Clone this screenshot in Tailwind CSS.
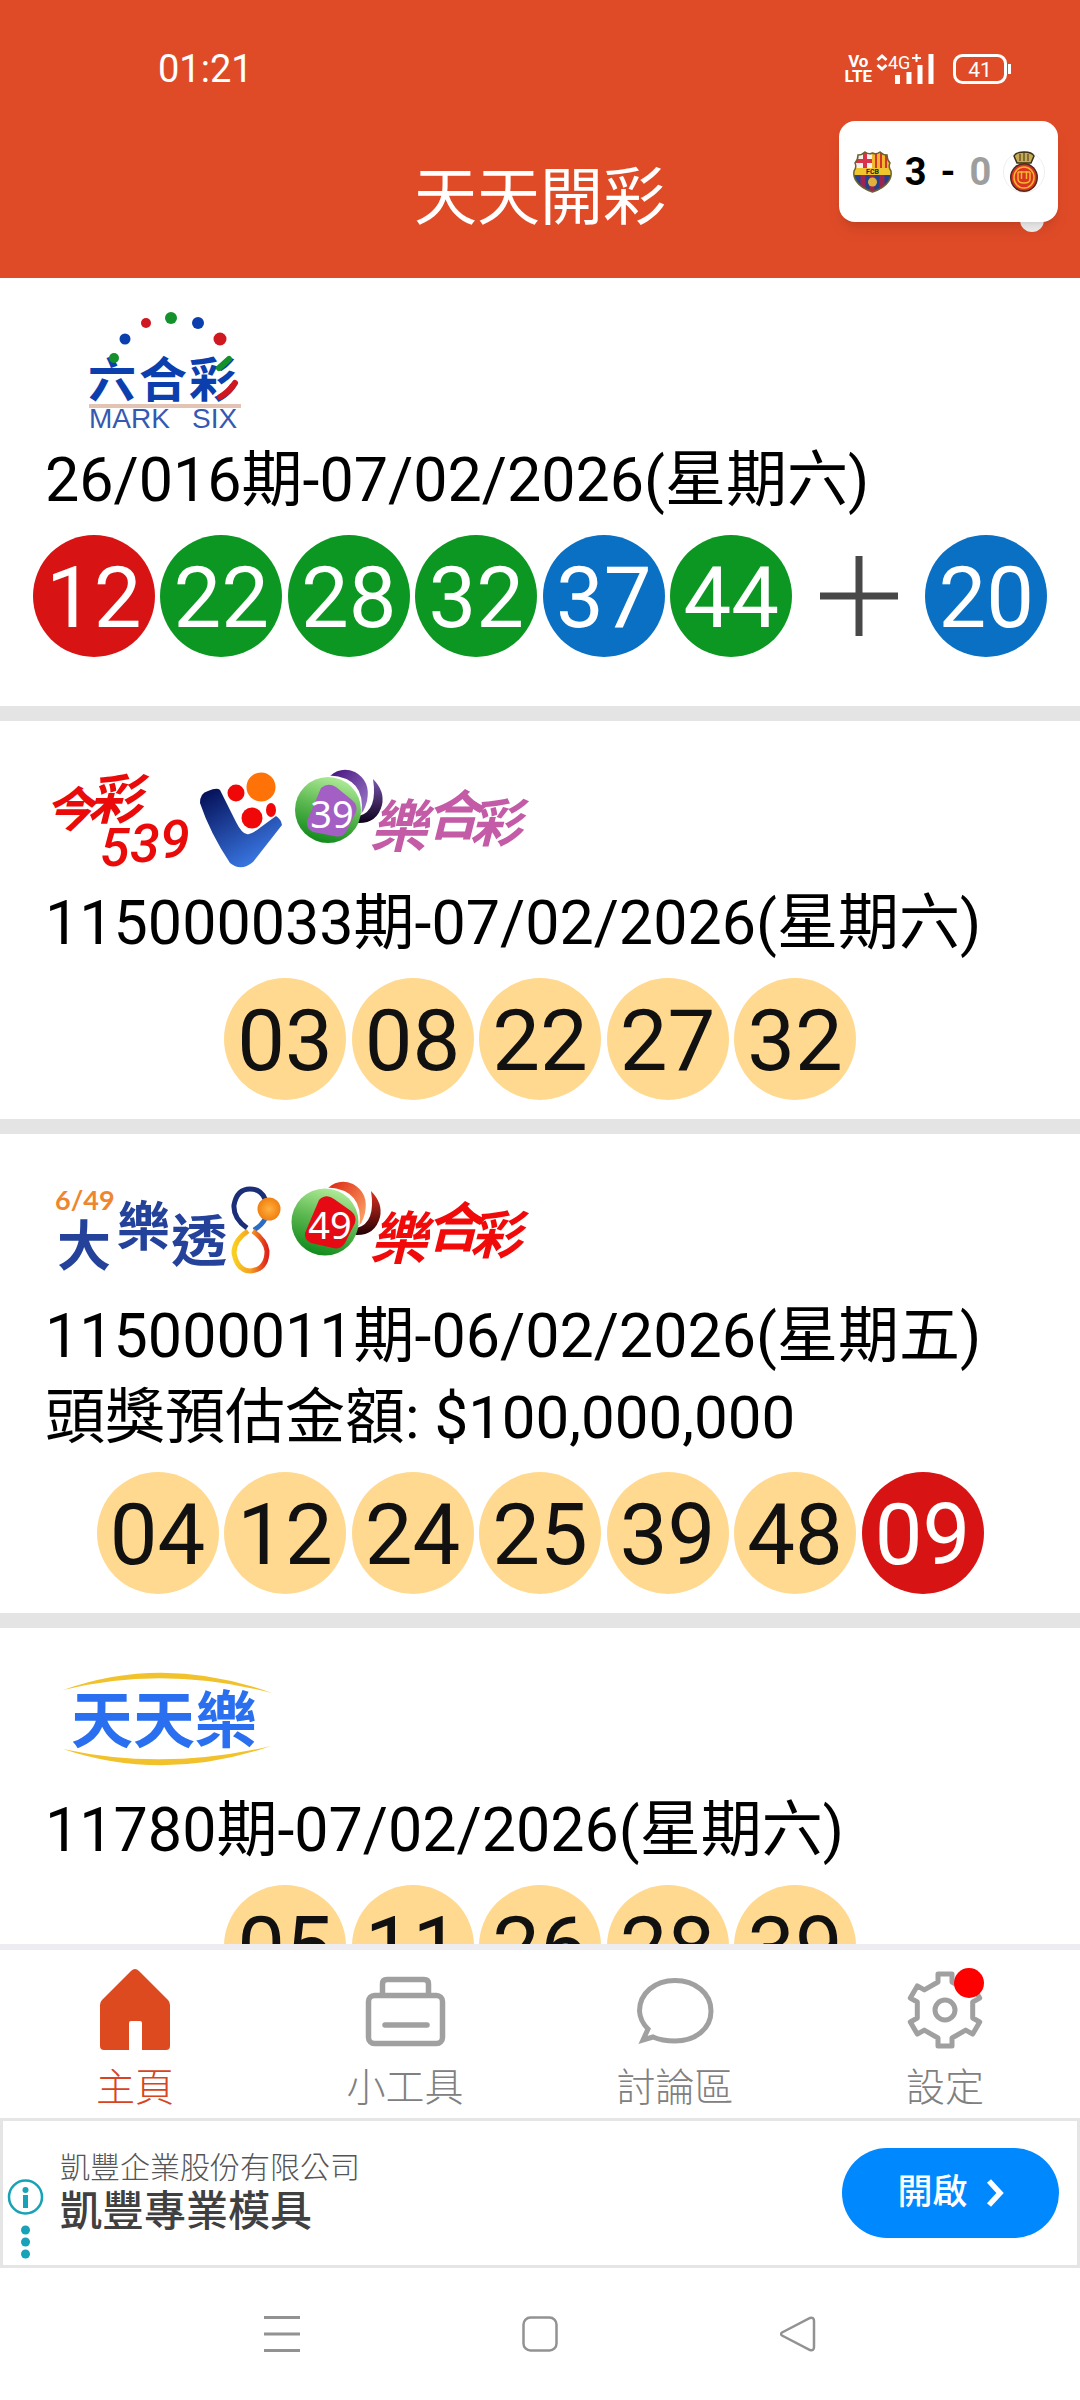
<!DOCTYPE html>
<html lang="zh-Hant">
<head>
  <meta charset="UTF-8" />
  <meta name="viewport" content="width=device-width, initial-scale=1.0"/>
  <title>天天開彩</title>
  <script src="https://cdn.jsdelivr.net/npm/@tailwindcss/browser@4"></script>
</head>
<body class="relative h-screen flex flex-col overflow-hidden bg-white text-black font-[Roboto,'Noto_Sans_CJK_TC',sans-serif]">

  <header class="bg-[#e04b27] text-white shrink-0">
    <div class="flex items-center justify-between h-[114px] pt-6 pl-[158px] pr-[68px]">
      <span class="text-[38px] leading-none">01:21</span>
      <div class="flex items-center">
        <div class="text-[17px] leading-[15px] font-bold text-center">Vo<br>LTE</div>
        <svg class="ml-1 w-[60px] h-[32px]" viewBox="0 0 60 32" fill="none">
          <path d="M1.500 7L6 3L10.500 7M1.500 12L6 16L10.500 12" stroke="#fff" stroke-width="3"/>
          <text x="12" y="16" font-size="18" fill="#fff">4G</text>
          <path d="M36 5h9M40.500 1v8" stroke="#fff" stroke-width="2"/>
          <path d="M21.500 22v9M33 19v12M44 12v19M55 1v30" stroke="#fff" stroke-width="5"/>
        </svg>
        <svg class="ml-4 w-[60px] h-[32px]" viewBox="0 0 60 32" fill="none">
          <rect x="2.500" y="2.500" width="51" height="27" rx="8" stroke="#fff" stroke-width="3"/>
          <path d="M57.500 11v10" stroke="#fff" stroke-width="3"/>
          <text x="28" y="23.500" font-size="21" text-anchor="middle" fill="#fff">41</text>
        </svg>
      </div>
    </div>
    <h1 class="flex items-center justify-center h-[164px] pt-1 text-[63px] font-normal">天天開彩</h1>
  </header>

  <!-- floating match score -->
  <div class="absolute right-[36px] top-[208px] size-6 rounded-full bg-[#f2f2f2]"></div>
  <div class="absolute right-[22px] top-[121px] flex items-center justify-between w-[219px] h-[101px] px-[13px] rounded-2xl bg-white shadow-lg">
    <svg class="w-[41px] h-[42px]" viewBox="0 0 41 42">
      <clipPath id="fcb"><path d="M6 4Q10 4 13 1Q17 4 20.500 2Q24 4 28 1Q31 4 35 4Q35 9 38 12Q36 16 39 20Q40 26 36 31Q32 37 20.500 41Q9 37 5 31Q1 26 2 20Q5 16 3 12Q6 9 6 4Z"/></clipPath>
      <g clip-path="url(#fcb)">
        <rect width="41" height="42" fill="#24408f"/>
        <rect width="21" height="18" fill="#f6f0ea"/>
        <path d="M13 0v18M4 10h17" stroke="#d8334a" stroke-width="4"/>
        <rect x="20" width="21" height="18" fill="#f2b72c"/>
        <path d="M24 0v18M29 0v18M34 0v18" stroke="#d0342c" stroke-width="2"/>
        <rect y="17" width="41" height="7" fill="#f0c52e"/>
        <path d="M11 24v18M20 24v18M30 24v18" stroke="#9d2450" stroke-width="5"/>
        <circle cx="20.500" cy="31" r="4.500" fill="#e2b13c"/>
        <text x="20.500" y="23" font-size="7" font-weight="bold" text-anchor="middle" fill="#222">FCB</text>
      </g>
      <path d="M6 4Q10 4 13 1Q17 4 20.500 2Q24 4 28 1Q31 4 35 4Q35 9 38 12Q36 16 39 20Q40 26 36 31Q32 37 20.500 41Q9 37 5 31Q1 26 2 20Q5 16 3 12Q6 9 6 4Z" fill="none" stroke="#6c6230" stroke-width="1.500"/>
    </svg>
    <div class="flex gap-[14px] text-[38px] leading-none font-bold">
      <span>3</span><span>-</span><span class="text-[#9e9e9e]">0</span>
    </div>
    <svg class="w-[42px] h-[42px]" viewBox="0 0 42 42">
      <circle cx="21" cy="21" r="20.500" fill="#fff" stroke="#eee"/>
      <path d="M11 5Q13 1 21 1Q29 1 31 5L28 12H14Z" fill="#c8ac55" stroke="#3b2f18" stroke-width="1.500"/>
      <path d="M17 3v7M21 1v9M25 3v7" stroke="#3b2f18" stroke-width="1"/>
      <ellipse cx="21" cy="26.500" rx="14" ry="14.500" fill="#4e2a1c"/>
      <ellipse cx="21" cy="26.500" rx="12.500" ry="13" fill="#dd3322"/>
      <ellipse cx="21" cy="26.500" rx="10" ry="10.500" fill="none" stroke="#f3b72e" stroke-width="1.500"/>
      <path d="M15 21v7q0 4 6 4t6-4v-7M18.500 20v8M23.500 20v8M15 21h12" fill="none" stroke="#f3b72e" stroke-width="1.500"/>
    </svg>
  </div>

  <main class="flex-1 min-h-0 overflow-y-auto [scrollbar-width:none] text-[61px] leading-[81px]">

    <section class="pb-[49px]">
      <h2 class="h-[162px] pl-11">
        <svg class="w-[520px] h-[162px] font-bold" viewBox="0 0 520 162" role="img" aria-label="六合彩">
          <g fill="#0c3fae" font-size="48" text-anchor="middle">
            <text x="68" y="119">六</text>
            <text x="119" y="119">合</text>
            <text x="169" y="119">彩</text>
          </g>
          <g stroke-width="6" stroke-linecap="round">
            <path d="M175 90L185 81" stroke="#14912a"/>
            <path d="M176 119Q185 114 191 105" stroke="#cf1820" fill="none"/>
          </g>
          <circle cx="70" cy="80" r="5" fill="#14912a"/>
          <circle cx="81" cy="61" r="5.500" fill="#0c3fae"/>
          <circle cx="102" cy="45" r="5" fill="#cf1820"/>
          <circle cx="127" cy="40" r="6" fill="#14912a"/>
          <circle cx="154" cy="45" r="6" fill="#0c3fae"/>
          <circle cx="176" cy="61" r="6.500" fill="#cf1820"/>
          <rect x="45" y="126" width="152" height="4" fill="#e3c3b4"/>
          <g fill="#3558b0" font-size="28" font-weight="400" font-family="Liberation Sans, sans-serif">
            <text x="45" y="150">MARK</text>
            <text x="148" y="150">SIX</text>
          </g>
        </svg>
      </h2>
      <p class="pl-[45px]">26/016期-07/02/2026(星期六)</p>
      <ul class="flex justify-center px-[30px] pt-[14px] text-[85px] leading-[126px] text-center text-white">
        <li class="w-1/8 flex justify-center"><span class="size-[122px] rounded-full bg-[#d81313]">12</span></li>
        <li class="w-1/8 flex justify-center"><span class="size-[122px] rounded-full bg-[#0c9722]">22</span></li>
        <li class="w-1/8 flex justify-center"><span class="size-[122px] rounded-full bg-[#0c9722]">28</span></li>
        <li class="w-1/8 flex justify-center"><span class="size-[122px] rounded-full bg-[#0c9722]">32</span></li>
        <li class="w-1/8 flex justify-center"><span class="size-[122px] rounded-full bg-[#0a70c4]">37</span></li>
        <li class="w-1/8 flex justify-center"><span class="size-[122px] rounded-full bg-[#0c9722]">44</span></li>
        <li class="w-1/8 flex justify-center items-center">
          <svg class="size-20" viewBox="0 0 80 80"><path d="M1 40h78M40 0v80" stroke="#484848" stroke-width="7"/></svg>
        </li>
        <li class="w-1/8 flex justify-center"><span class="size-[122px] rounded-full bg-[#0a70c4]">20</span></li>
      </ul>
    </section>

    <section class="border-t-[15px] border-[#e4e4e4] pb-[19px]">
      <h2 class="h-[162px] pl-11">
        <svg class="w-[520px] h-[162px] font-bold overflow-visible" viewBox="0 0 520 162" role="img" aria-label="今彩539 39樂合彩">
          <defs>
            <linearGradient id="vee" x1="0" y1="0" x2="0.600" y2="1">
              <stop offset="0" stop-color="#020a50"/><stop offset="1" stop-color="#3a78e4"/>
            </linearGradient>
            <linearGradient id="leaf" x1="0.700" y1="0" x2="0.400" y2="1">
              <stop offset="0" stop-color="#b4ee9c"/><stop offset="0.500" stop-color="#5cb850"/><stop offset="1" stop-color="#118a1c"/>
            </linearGradient>
            <linearGradient id="plum" x1="0" y1="0" x2="1" y2="1">
              <stop offset="0" stop-color="#44107c"/><stop offset="1" stop-color="#a080cc"/>
            </linearGradient>
            <linearGradient id="plumdark" x1="0" y1="0" x2="0" y2="1">
              <stop offset="0" stop-color="#7a55b0"/><stop offset="1" stop-color="#0c0018"/>
            </linearGradient>
          </defs>
          <g fill="#ea0a0a" font-style="italic">
            <text x="1" y="106" font-size="48">今</text>
            <text x="44" y="98" font-size="54">彩</text>
            <text y="145" font-size="54" font-weight="500"><tspan x="56">5</tspan><tspan x="86" dy="-4">3</tspan><tspan x="116" dy="-4">9</tspan></text>
          </g>
          <path d="M156 82Q156 72 164 70Q173 66 176 69L192 101Q199 115 205 113Q211 111 217 106L232 95Q237 98 238 104L209 141Q197 151 186 142Q166 112 156 82Z" fill="url(#vee)"/>
          <circle cx="192" cy="72" r="8.500" fill="#f00808"/>
          <circle cx="217" cy="66" r="14.500" fill="#ff7208"/>
          <circle cx="208" cy="97" r="10.500" fill="#f00808"/>
          <ellipse cx="227" cy="89" rx="5" ry="7" fill="#f00808"/>
          <path d="M286 55Q297 45 311 51Q327 60 323 80Q320 92 315 94Q322 62 286 55Z" fill="url(#plum)"/>
          <path d="M329 58Q341 70 338 84Q333 103 313 102L315 95Q334 90 329 58Z" fill="url(#plumdark)"/>
          <path d="M286 56Q320 58 316 92" fill="none" stroke="#fff" stroke-width="3"/>
          <circle cx="284" cy="89" r="33" fill="url(#leaf)"/>
          <path d="M277 67Q284 61 292 66L308 79Q314 84 312 91L302 111Q298 117 290 115L269 111Q262 108 263 100Z" fill="#a45fc4"/>
          <text x="288" y="107" font-size="38" font-weight="400" text-anchor="middle" fill="#fff" font-family="Noto Sans, sans-serif">39</text>
          <g fill="#c45ba6" font-style="italic">
            <text x="326" y="126" font-size="57">樂</text>
            <text x="382" y="114" font-size="54">合</text>
            <text x="426" y="121" font-size="52">彩</text>
          </g>
        </svg>
      </h2>
      <p class="pl-[45px]">115000033期-07/02/2026(星期六)</p>
      <ul class="flex justify-center px-[30px] pt-[14px] text-[85px] leading-[126px] text-center text-[#111]">
        <li class="w-1/8 flex justify-center"><span class="size-[122px] rounded-full bg-[#ffd990]">03</span></li>
        <li class="w-1/8 flex justify-center"><span class="size-[122px] rounded-full bg-[#ffd990]">08</span></li>
        <li class="w-1/8 flex justify-center"><span class="size-[122px] rounded-full bg-[#ffd990]">22</span></li>
        <li class="w-1/8 flex justify-center"><span class="size-[122px] rounded-full bg-[#ffd990]">27</span></li>
        <li class="w-1/8 flex justify-center"><span class="size-[122px] rounded-full bg-[#ffd990]">32</span></li>
      </ul>
    </section>

    <section class="border-t-[15px] border-[#e4e4e4] pb-[19px]">
      <h2 class="h-[162px] pl-11">
        <svg class="w-[520px] h-[162px] font-bold" viewBox="0 0 520 162" role="img" aria-label="6/49大樂透 49樂合彩">
          <defs>
            <linearGradient id="fire" x1="0" y1="0" x2="1" y2="1">
              <stop offset="0" stop-color="#dc2410"/><stop offset="1" stop-color="#ffb070"/>
            </linearGradient>
            <linearGradient id="wine" x1="0" y1="0" x2="0" y2="1">
              <stop offset="0" stop-color="#e03020"/><stop offset="1" stop-color="#200004"/>
            </linearGradient>
            <linearGradient id="loop" x1="0" y1="0" x2="1" y2="0">
              <stop offset="0" stop-color="#fad020"/><stop offset="0.500" stop-color="#f5a020"/><stop offset="1" stop-color="#e0241c"/>
            </linearGradient>
            <radialGradient id="orange">
              <stop offset="0" stop-color="#ffb040"/><stop offset="1" stop-color="#f08010"/>
            </radialGradient>
          </defs>
          <text x="11" y="76" font-size="27" fill="#ee8630" font-family="Lato, sans-serif">6/49</text>
          <g fill="#24429a">
            <text x="13" y="132" font-size="54">大</text>
            <text x="73" y="112" font-size="53">樂</text>
            <text x="127" y="127" font-size="56">透</text>
          </g>
          <g fill="none" stroke-width="5">
            <path d="M203 94Q189 84 190 71Q193 55 206 55Q217 55 221 65" stroke="#1a2f78"/>
            <path d="M221 85Q218 91 210 96" stroke="#2b6cc4"/>
            <path d="M204 97Q190 106 190 119Q193 137 207 137Q223 135 223 117Q222 107 209 97" stroke="url(#loop)"/>
          </g>
          <circle cx="225" cy="75" r="11.500" fill="url(#orange)"/>
          <path d="M284 54Q295 44 309 50Q325 59 321 79Q318 91 313 93Q320 61 284 54Z" fill="url(#fire)"/>
          <path d="M327 57Q339 69 336 83Q331 102 311 101L313 94Q332 89 327 57Z" fill="url(#wine)"/>
          <path d="M284 55Q318 57 314 91" fill="none" stroke="#fff" stroke-width="3"/>
          <circle cx="281" cy="88" r="33.500" fill="url(#leaf)"/>
          <path d="M275 66Q282 59 290 65L307 77Q313 82 311 89L301 109Q297 116 289 114L267 109Q260 106 261 99Z" fill="#e60a14"/>
          <text x="286" y="105" font-size="38" font-weight="400" text-anchor="middle" fill="#fff" font-family="Noto Sans, sans-serif">49</text>
          <g fill="#f00a0a" font-style="italic">
            <text x="326" y="125" font-size="57">樂</text>
            <text x="382" y="113" font-size="54">合</text>
            <text x="426" y="120" font-size="52">彩</text>
          </g>
        </svg>
      </h2>
      <p class="pl-[45px]">115000011期-06/02/2026(星期五)</p>
      <p class="pl-[45px] text-[60px]">頭獎預估金額: $100,000,000</p>
      <ul class="flex justify-center px-[30px] pt-[14px] text-[85px] leading-[126px] text-center text-[#111]">
        <li class="w-1/8 flex justify-center"><span class="size-[122px] rounded-full bg-[#ffd990]">04</span></li>
        <li class="w-1/8 flex justify-center"><span class="size-[122px] rounded-full bg-[#ffd990]">12</span></li>
        <li class="w-1/8 flex justify-center"><span class="size-[122px] rounded-full bg-[#ffd990]">24</span></li>
        <li class="w-1/8 flex justify-center"><span class="size-[122px] rounded-full bg-[#ffd990]">25</span></li>
        <li class="w-1/8 flex justify-center"><span class="size-[122px] rounded-full bg-[#ffd990]">39</span></li>
        <li class="w-1/8 flex justify-center"><span class="size-[122px] rounded-full bg-[#ffd990]">48</span></li>
        <li class="w-1/8 flex justify-center"><span class="size-[122px] rounded-full bg-[#d81313] text-white">09</span></li>
      </ul>
    </section>

    <section class="border-t-[15px] border-[#e4e4e4] pb-[19px]">
      <h2 class="h-[162px] pl-11">
        <svg class="w-[520px] h-[162px] font-bold" viewBox="0 0 520 162" role="img" aria-label="天天樂">
          <path d="M19 62Q120 26 228 65Q120 37 19 62Z" fill="#f2c22c"/>
          <path d="M19 121Q120 155 227 118Q120 143 19 121Z" fill="#f2c22c"/>
          <text x="27" y="115" font-size="62" fill="#2a6ff0">天天樂</text>
        </svg>
      </h2>
      <p class="pl-[45px]">11780期-07/02/2026(星期六)</p>
      <ul class="flex justify-center px-[30px] pt-[14px] text-[85px] leading-[126px] text-center text-[#111]">
        <li class="w-1/8 flex justify-center"><span class="size-[122px] rounded-full bg-[#ffd990]">05</span></li>
        <li class="w-1/8 flex justify-center"><span class="size-[122px] rounded-full bg-[#ffd990]">11</span></li>
        <li class="w-1/8 flex justify-center"><span class="size-[122px] rounded-full bg-[#ffd990]">26</span></li>
        <li class="w-1/8 flex justify-center"><span class="size-[122px] rounded-full bg-[#ffd990]">28</span></li>
        <li class="w-1/8 flex justify-center"><span class="size-[122px] rounded-full bg-[#ffd990]">39</span></li>
      </ul>
    </section>
  </main>

  <nav class="shrink-0 flex border-t-[6px] border-[#ededf1] pt-[15px] pb-[3px] text-[39px] leading-[54px] font-light text-[#808080]">
    <a href="#" class="flex-1 flex flex-col items-center gap-[6px] text-[#d94420]">
      <svg class="size-[90px]" viewBox="0 0 90 90"><path d="M41 6Q45 2 49 6L78 35Q80 37 80 40V81Q80 85 76 85H52V58Q52 56 50 56H41Q39 56 39 58V85H14Q10 85 10 81V40Q10 37 12 35Z" fill="#de4a1f"/></svg>
      主頁
    </a>
    <a href="#" class="flex-1 flex flex-col items-center gap-[6px]">
      <svg class="size-[90px]" viewBox="0 0 90 90" fill="none" stroke="#a0a0a0" stroke-width="5.500">
        <rect x="8.500" y="30.500" width="74" height="48" rx="6"/>
        <path d="M22.500 30V19Q22.500 14.500 27 14.500H64Q68.500 14.500 68.500 19V30"/>
        <path d="M25 60H67" stroke-linecap="round"/>
      </svg>
      小工具
    </a>
    <a href="#" class="flex-1 flex flex-col items-center gap-[6px]">
      <svg class="size-[90px]" viewBox="0 0 90 90" fill="none" stroke="#a0a0a0" stroke-width="5">
        <path d="M23 72Q32 76 45 76C65 76 81 64 81 46C81 28 65 15.500 45 15.500C25 15.500 9.500 28 9.500 46Q10 56 18 64L13 75Z"/>
      </svg>
      討論區
    </a>
    <a href="#" class="flex-1 flex flex-col items-center gap-[6px]">
      <svg class="size-[90px]" viewBox="-45 -45 90 90" fill="none" stroke="#a0a0a0" stroke-width="5" stroke-linejoin="round">
        <path d="M-7 -28V-36H7V-28L20.700 -20.100L27.700 -24.100L34.700 -12L27.700 -8V8L34.700 12L27.700 24.100L20.700 20.100L7 28V36H-7V28L-20.700 20.100L-27.700 24.100L-34.700 12L-27.700 8V-8L-34.700 -12L-27.700 -24.100L-20.700 -20.100Z"/>
        <circle r="10"/>
        <circle cx="24" cy="-27" r="15" fill="#f00" stroke="none"/>
      </svg>
      設定
    </a>
  </nav>

  <aside class="shrink-0 flex items-center border-[3px] border-[#e5e5e5] h-[150px] pr-[18px]">
    <svg class="w-[44px] h-[144px]" viewBox="0 0 44 144" fill="#17a2b8">
      <circle cx="22.500" cy="76" r="16.500" fill="none" stroke="#17a2b8" stroke-width="2.500"/>
      <circle cx="22.500" cy="69" r="3"/><rect x="20" y="74" width="5" height="13"/>
      <circle cx="22.500" cy="109" r="4.500"/><circle cx="22.500" cy="121" r="4.500"/><circle cx="22.500" cy="133" r="4.500"/>
    </svg>
    <div class="flex-1 pl-[13px] pb-[6px]">
      <p class="text-[30px] leading-[44px] font-light text-[#555]">凱豐企業股份有限公司</p>
      <p class="text-[42px] leading-[44px] font-medium text-[#404040]">凱豐專業模具</p>
    </div>
    <button class="flex items-center justify-center gap-[18px] w-[217px] h-[90px] rounded-full bg-[#0088ff] text-white text-[35px] font-medium">
      開啟
      <svg class="w-[18px] h-[28px]" viewBox="0 0 18 28" fill="none"><path d="M3 2L14 14L3 26" stroke="#fff" stroke-width="5.500"/></svg>
    </button>
  </aside>

  <footer class="shrink-0 flex h-[132px] px-[153px]">
    <button class="flex-1 flex items-center justify-center" aria-label="最近">
      <svg class="size-9" viewBox="0 0 36 36"><path d="M0 1.500h36M0 18h36M0 34.500h36" stroke="#929292" stroke-width="3"/></svg>
    </button>
    <button class="flex-1 flex items-center justify-center" aria-label="主畫面">
      <svg class="size-9" viewBox="0 0 36 36"><rect x="1.500" y="1.500" width="33" height="33" rx="7" fill="none" stroke="#929292" stroke-width="2.500"/></svg>
    </button>
    <button class="flex-1 flex items-center justify-center" aria-label="返回">
      <svg class="size-9" viewBox="0 0 36 36"><path d="M2 16.500L30 2Q34 1 34 5V31Q34 35 30 34L2 19.500Q0 18 2 16.500Z" fill="none" stroke="#929292" stroke-width="2.500"/></svg>
    </button>
  </footer>
</body>
</html>
